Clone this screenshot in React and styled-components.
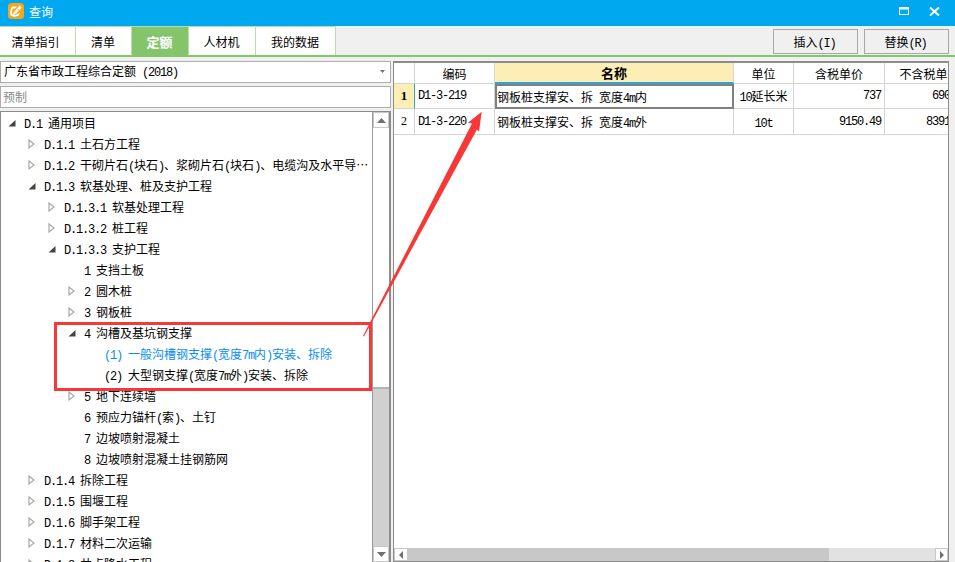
import React from "react";
import styled, { createGlobalStyle } from "styled-components";

const GlobalStyle = createGlobalStyle`
  html, body {
    margin: 0;
    padding: 0;
    background: #f0f0f0;
    overflow: hidden;
  }
  * {
    box-sizing: border-box;
  }
`;

const Page = styled.div`
  position: relative;
  width: 955px;
  height: 562px;
  overflow: hidden;
  background: #f0f0f0;
  color: #000;
  font-family: "Noto Sans CJK SC", "Liberation Sans", sans-serif;
  font-size: 12px;
`;

const TitleBar = styled.div`
  display: flex;
  align-items: center;
  height: 26px;
  padding: 0 15px 4px 8px;
  background: #00a9ef;
  color: #fff;
`;

const TitleText = styled.span`
  margin-left: 5px;
  font-size: 12px;
  flex: 1;
`;

const WindowButton = styled.span`
  display: flex;
  margin-left: 20px;
`;

const TabBar = styled.div`
  display: flex;
  justify-content: space-between;
  height: 31px;
  border-bottom: 2px solid #84c76a;
  padding-right: 6px;
`;

const Tabs = styled.div`
  display: flex;
`;

const Tab = styled.div`
  display: flex;
  align-items: center;
  justify-content: center;
  width: ${(p) => p.$width}px;
  padding-right: 1px;
  background: ${(p) => (p.$active ? "#84c56b" : "#fff")};
  border-right: 1px solid #b7dfa8;
  border-top: 1px solid #b7dfa8;
  color: ${(p) => (p.$active ? "#fff" : "#000")};
  font-weight: ${(p) => (p.$active ? 700 : 400)};
  font-size: ${(p) => (p.$active ? 13 : 12)}px;

  &:first-child {
    padding-right: 4px;
  }
`;

const Actions = styled.div`
  display: flex;
  gap: 6px;
  padding-top: 3px;
`;

const ActionButton = styled.button`
  width: 85px;
  height: 25px;
  padding: 0 2px 0 0;
  border: 1px solid #a8a8a8;
  background: #f0f0f0;
  color: #000;
  font-family: inherit;
  font-size: 12px;
`;

const Body = styled.div`
  display: flex;
  gap: 2px;
  padding: 4px 6px 0 0;
  height: 505px;
`;

const LeftPane = styled.div`
  display: flex;
  flex-direction: column;
  width: 391px;
  gap: 3px;
`;

const Combo = styled.div`
  display: flex;
  align-items: center;
  justify-content: space-between;
  height: 22px;
  padding: 0 5px 2px 3px;
  border: 1px solid #adadad;
  background: #fff;
`;

const SearchInput = styled.div`
  display: flex;
  align-items: center;
  height: 22px;
  padding: 0 2px 2px;
  border: 1px solid #adadad;
  background: #fff;
  color: #8a8a8a;
`;

const TreePanel = styled.div`
  display: flex;
  flex: 1;
  min-height: 0;
  overflow: hidden;
  border-style: solid;
  border-color: #8c8c8c;
  border-width: 1px 2px 0 1px;
  background: #fff;
`;

const Tree = styled.div`
  flex: 1;
  overflow: hidden;
`;

const Row = styled.div`
  display: flex;
  align-items: center;
  height: 21px;
  padding-left: ${(p) => 7 + p.$level * 20}px;
  color: ${(p) => (p.$selected ? "#0a8cf0" : "#000")};
  white-space: nowrap;
`;

const Toggle = styled.span`
  display: flex;
  align-items: center;
  width: 16px;
  flex: none;
`;

const Latin = styled.span`
  font-family: "Liberation Mono", monospace;
  font-size: 12px;
  letter-spacing: -1.2px;
  white-space: pre;
`;

const VScroll = styled.div`
  display: flex;
  flex-direction: column;
  flex: none;
  width: 17px;
  background: #d0d0d0;
  border-left: 1px solid #9a9a9a;
`;

const ScrollButton = styled.div`
  display: flex;
  align-items: center;
  justify-content: center;
  flex: none;
  width: ${(p) => p.$w || 16}px;
  height: ${(p) => p.$h || 16}px;
  background: #fff;
  border: 1px solid #c8c8c8;
`;

const VThumb = styled.div`
  height: 261px;
  flex: none;
  background: #fff;
  border-bottom: 2px solid #b4b4b4;
`;

const VTrack = styled.div`
  flex: 1;
`;

const RightPane = styled.div`
  display: flex;
  flex-direction: column;
  flex: 1;
  min-width: 0;
  height: 501px;
  border: 1px solid #8c8c8c;
  border-top-width: 2px;
  background: #fff;
  overflow: hidden;
`;

const Grid = styled.div`
  display: grid;
  flex: 1;
  grid-template-columns: 21px 80px 239px 60px 91px 90px;
  grid-auto-rows: min-content;
  align-content: start;
  overflow: hidden;
`;

const Cell = styled.div`
  display: flex;
  align-items: center;
  justify-content: ${(p) => p.$align || "flex-start"};
  height: ${(p) => p.$height}px;
  padding: ${(p) => p.$pad || "0 2px"};
  border-right: 1px solid #d4d4d4;
  border-bottom: 1px solid #d4d4d4;
  background: ${(p) => (p.$accent ? "#fdeeb5" : "#fff")};
  font-weight: ${(p) => (p.$accent ? 700 : 400)};
  font-size: ${(p) => (p.$accent ? 13 : 12)}px;
  white-space: nowrap;
`;

const NameHeader = styled(Cell)`
  border-bottom: 2px solid #2ea4d8;
`;

const IndexCell = styled(Cell)`
  border-right: ${(p) => (p.$accent ? "1px solid #2ea4d8" : "1px solid #d4d4d4")};
  font-family: "Liberation Serif", serif;
`;

const ActiveCell = styled(Cell)`
  border: 2px solid #808080;
  padding: 0;
`;

const HScroll = styled.div`
  display: flex;
  flex: none;
  height: 13px;
  background: #e2e2e2;
`;

const HThumb = styled.div`
  width: 421px;
  background: #c8c8c8;
`;

const HTrack = styled.div`
  flex: 1;
`;

const Callout = styled.div`
  position: absolute;
  left: 54px;
  top: 322px;
  width: 318px;
  height: 69px;
  border: 3px solid #f73838;
  pointer-events: none;
`;

const ArrowLayer = styled.svg`
  position: absolute;
  left: 0;
  top: 0;
  pointer-events: none;
`;

// ascii runs are set in a narrower mono so they take half a CJK cell
const Mixed = ({ children }) =>
  children.split(/([\x00-\x7f]+)/).map((part, i) =>
    /^[\x00-\x7f]+$/.test(part) ? <Latin key={i}>{part}</Latin> : part
  );

const Closed = () => (
  <svg width="7" height="10" viewBox="0 0 7 10">
    <path d="M1 1 L6 5 L1 9 Z" fill="#fff" stroke="#a8a8a8" strokeWidth="1.2" />
  </svg>
);

const Open = () => (
  <svg width="8" height="8" viewBox="0 0 8 8">
    <path d="M7.5 1 V7.5 H0.5 Z" fill="#444" />
  </svg>
);

const AppIcon = () => (
  <svg width="16" height="16" viewBox="0 0 16 16">
    <rect x="0" y="0" width="16" height="16" rx="3.5" fill="#f9a51a" />
    <path d="M4 3.5 H9 L7 5.5 H5 Q3.5 8 4 11 L7.5 12 L12 9.5 L11 12.5 L6.5 14 L2.5 12.5 Q1.5 7 4 3.5 Z" fill="#fff" />
    <path d="M5.5 9.5 L11.5 2.5 L13.8 4.5 L7.8 11 L5 11.5 Z" fill="#fff" />
    <path d="M9.5 6 L11.5 7.5" stroke="#f9a51a" strokeWidth="1" />
  </svg>
);

const Maximize = () => (
  <svg width="10" height="8" viewBox="0 0 10 8">
    <rect x="0.5" y="0.5" width="9" height="7" fill="none" stroke="#fff" />
    <rect x="0" y="0" width="10" height="2.5" fill="#fff" />
  </svg>
);

const CloseIcon = () => (
  <svg width="11" height="9" viewBox="0 0 11 9">
    <path d="M1 0.5 L10 8.5 M10 0.5 L1 8.5" stroke="#fff" strokeWidth="2" />
  </svg>
);

const Caret = ({ dir = "down", w = 9, h = 5, color = "#6f6f78" }) => {
  const points = {
    down: `0,0 ${w},0 ${w / 2},${h}`,
    up: `0,${h} ${w},${h} ${w / 2},0`,
    left: `${w},0 ${w},${h} 0,${h / 2}`,
    right: `0,0 0,${h} ${w},${h / 2}`,
  };
  return (
    <svg width={w} height={h} viewBox={`0 0 ${w} ${h}`}>
      <polygon points={points[dir]} fill={color} />
    </svg>
  );
};

const tabs = [
  { label: "清单指引", width: 76 },
  { label: "清单", width: 56 },
  { label: "定额", width: 57, active: true },
  { label: "人材机", width: 67 },
  { label: "我的数据", width: 80 },
];

const treeRows = [
  { level: 0, state: "open", text: "D.1 通用项目" },
  { level: 1, state: "closed", text: "D.1.1 土石方工程" },
  { level: 1, state: "closed", text: "D.1.2 干砌片石(块石)、浆砌片石(块石)、电缆沟及水平导…" },
  { level: 1, state: "open", text: "D.1.3 软基处理、桩及支护工程" },
  { level: 2, state: "closed", text: "D.1.3.1 软基处理工程" },
  { level: 2, state: "closed", text: "D.1.3.2 桩工程" },
  { level: 2, state: "open", text: "D.1.3.3 支护工程" },
  { level: 3, text: "1 支挡土板" },
  { level: 3, state: "closed", text: "2 圆木桩" },
  { level: 3, state: "closed", text: "3 钢板桩" },
  { level: 3, state: "open", text: "4 沟槽及基坑钢支撑" },
  { level: 4, selected: true, text: "(1) 一般沟槽钢支撑(宽度7m内)安装、拆除" },
  { level: 4, text: "(2) 大型钢支撑(宽度7m外)安装、拆除" },
  { level: 3, state: "closed", text: "5 地下连续墙" },
  { level: 3, text: "6 预应力锚杆(索)、土钉" },
  { level: 3, text: "7 边坡喷射混凝土" },
  { level: 3, text: "8 边坡喷射混凝土挂钢筋网" },
  { level: 1, state: "closed", text: "D.1.4 拆除工程" },
  { level: 1, state: "closed", text: "D.1.5 围堰工程" },
  { level: 1, state: "closed", text: "D.1.6 脚手架工程" },
  { level: 1, state: "closed", text: "D.1.7 材料二次运输" },
  { level: 1, state: "closed", text: "D.1.8 井点降水工程" },
];

const columns = ["编码", "名称", "单位", "含税单价", "不含税单价"];

const rows = [
  { id: "1", code: "D1-3-219", name: "钢板桩支撑安、拆 宽度4m内", unit: "10延长米", tax: "737", net: "690", active: true },
  { id: "2", code: "D1-3-220", name: "钢板桩支撑安、拆 宽度4m外", unit: "10t", tax: "9150.49", net: "8391" },
];

export default function App() {
  return (
    <Page>
      <GlobalStyle />
      <TitleBar>
        <AppIcon />
        <TitleText>查询</TitleText>
        <WindowButton><Maximize /></WindowButton>
        <WindowButton><CloseIcon /></WindowButton>
      </TitleBar>

      <TabBar>
        <Tabs>
          {tabs.map((t) => (
            <Tab key={t.label} $width={t.width} $active={t.active}>{t.label}</Tab>
          ))}
        </Tabs>
        <Actions>
          <ActionButton><Mixed>插入(I)</Mixed></ActionButton>
          <ActionButton><Mixed>替换(R)</Mixed></ActionButton>
        </Actions>
      </TabBar>

      <Body>
        <LeftPane>
          <Combo>
            <span><Mixed>广东省市政工程综合定额 (2018)</Mixed></span>
            <Caret w={5} h={3} />
          </Combo>
          <SearchInput>预制</SearchInput>
          <TreePanel>
            <Tree>
              {treeRows.map((r) => (
                <Row key={r.text} $level={r.level} $selected={r.selected}>
                  <Toggle>
                    {r.state === "open" && <Open />}
                    {r.state === "closed" && <Closed />}
                  </Toggle>
                  <span><Mixed>{r.text}</Mixed></span>
                </Row>
              ))}
            </Tree>
            <VScroll>
              <ScrollButton><Caret dir="up" /></ScrollButton>
              <VThumb />
              <VTrack />
              <ScrollButton><Caret /></ScrollButton>
            </VScroll>
          </TreePanel>
        </LeftPane>

        <RightPane>
          <Grid>
            <Cell $height={21} />
            {columns.map((c) => {
              const Head = c === "名称" ? NameHeader : Cell;
              return (
                <Head key={c} $height={21} $align="center" $accent={c === "名称"}>{c}</Head>
              );
            })}
            {rows.map((r) => {
              const Name = r.active ? ActiveCell : Cell;
              const height = r.active ? 25 : 26;
              return (
                <React.Fragment key={r.id}>
                  <IndexCell $height={height} $align="center" $accent={r.active}>{r.id}</IndexCell>
                  <Cell $height={height} $pad="0 3px"><Latin>{r.code}</Latin></Cell>
                  <Name $height={height}><span><Mixed>{r.name}</Mixed></span></Name>
                  <Cell $height={height} $align="center"><span><Mixed>{r.unit}</Mixed></span></Cell>
                  <Cell $height={height} $align="flex-end" $pad="0 3px"><Latin>{r.tax}</Latin></Cell>
                  <Cell $height={height} $align="flex-end" $pad="0 24px 0 0"><Latin>{r.net}</Latin></Cell>
                </React.Fragment>
              );
            })}
          </Grid>
          <HScroll>
            <ScrollButton $w={14} $h={13}><Caret dir="left" w={4} h={8} /></ScrollButton>
            <HThumb />
            <HTrack />
            <ScrollButton $w={13} $h={13}><Caret dir="right" w={4} h={8} /></ScrollButton>
          </HScroll>
        </RightPane>
      </Body>

      <Callout />
      <ArrowLayer width="955" height="562" viewBox="0 0 955 562">
        <polygon points="481.7,111.7 468,122.7 472,123.5 363,336 364,336.5 477,129.5 479,131.7" fill="#f73838" />
      </ArrowLayer>
    </Page>
  );
}
